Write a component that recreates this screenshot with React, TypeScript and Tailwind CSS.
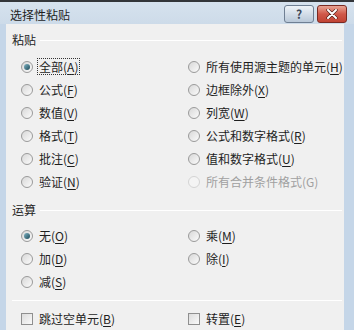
import React from "react";

const font = { fontFamily: '"Noto Sans CJK SC", "Noto Sans", sans-serif' };

function Label({ text, k, disabled }: { text: string; k: string; disabled?: boolean }) {
  return (
    <span className={disabled ? "text-[#a0a0a0]" : "text-[#1e1e1e]"}>
      {text}(
      <span className={disabled ? "" : "underline underline-offset-2"}>{k}</span>)
    </span>
  );
}

function Radio({ text, k, checked, disabled, focus }: { text: string; k: string; checked?: boolean; disabled?: boolean; focus?: boolean }) {
  return (
    <div className="flex items-center h-[23px] whitespace-nowrap">
      <span
        className={
          "w-[12px] h-[12px] rounded-full border flex items-center justify-center shrink-0 " +
          (disabled
            ? "border-[#d4d4d4] bg-[#f4f4f4]"
            : "border-[#9a9a9a] bg-gradient-to-br from-[#d8d8d8] to-[#fbfbfb]")
        }
      >
        {checked && (
          <span className="w-[6px] h-[6px] rounded-full bg-gradient-to-br from-[#7fb4c4] to-[#1d4b5a]" />
        )}
      </span>
      <span className={"ml-[5px] text-[12px] leading-[15px] px-[1px] " + (focus ? "outline outline-1 outline-dotted outline-[#333]" : "")}>
        <Label text={text} k={k} disabled={disabled} />
      </span>
    </div>
  );
}

function Check({ text, k }: { text: string; k: string }) {
  return (
    <div className="flex items-center h-[23px] whitespace-nowrap">
      <span className="w-[12px] h-[12px] border border-[#8f8f8f] bg-gradient-to-br from-[#dcdcdc] to-[#fafafa] shrink-0" />
      <span className="ml-[5px] text-[12px] leading-[15px] px-[1px]">
        <Label text={text} k={k} />
      </span>
    </div>
  );
}

function GroupTitle({ title }: { title: string }) {
  return (
    <div className="flex items-center h-[26px] pl-[6px] pr-[2px]">
      <span className="text-[12px] text-[#1e1e1e]">{title}</span>
      <span className="flex-1 ml-[4px] h-px bg-[#d9d9d9] border-b border-white" />
    </div>
  );
}

export default function App() {
  return (
    <div className="w-[354px] h-[330px] overflow-hidden flex flex-col bg-[#c5d6e8]" style={font}>
      <div className="h-[3px] bg-[#33363a]" />
      <div className="h-[30px] flex items-center bg-gradient-to-b from-[#d6e2ee] to-[#cddbe9]">
        <span className="ml-[10px] mt-[3px] text-[12px] text-[#1e1e1e]">选择性粘贴</span>
        <div className="ml-auto mr-[7px] flex gap-[3px] mt-[1px]">
          <div className="w-[30px] h-[18px] rounded-[3px] border border-[#6f7f93] bg-gradient-to-b from-[#eef3f8] via-[#d3dde8] to-[#b9c8d8] flex items-center justify-center text-[12px] font-bold text-[#3e4a5a]">
            ?
          </div>
          <div className="w-[30px] h-[18px] rounded-[3px] border border-[#7a2a22] bg-gradient-to-b from-[#e8a394] via-[#d0594a] to-[#c14333] flex items-center justify-center">
            <svg width="12" height="10" viewBox="0 0 12 10">
              <path d="M2 1 L10 9 M10 1 L2 9" stroke="#4a1a14" strokeWidth="3.2" strokeLinecap="round" />
              <path d="M2 1 L10 9 M10 1 L2 9" stroke="#ffffff" strokeWidth="2" strokeLinecap="round" />
            </svg>
          </div>
        </div>
      </div>
      <div className="flex-1 ml-[6px] mr-[10px] bg-[#f0f0f0] pt-[3px]">
        <GroupTitle title="粘贴" />
        <div className="grid grid-cols-[167px_1fr] pl-[15px] mt-[2px]">
          <Radio text="全部" k="A" checked focus />
          <Radio text="所有使用源主题的单元" k="H" />
          <Radio text="公式" k="F" />
          <Radio text="边框除外" k="X" />
          <Radio text="数值" k="V" />
          <Radio text="列宽" k="W" />
          <Radio text="格式" k="T" />
          <Radio text="公式和数字格式" k="R" />
          <Radio text="批注" k="C" />
          <Radio text="值和数字格式" k="U" />
          <Radio text="验证" k="N" />
          <Radio text="所有合并条件格式" k="G" disabled />
        </div>
        <div className="mt-[4px]">
          <GroupTitle title="运算" />
        </div>
        <div className="grid grid-cols-[167px_1fr] pl-[15px] mt-[1px]">
          <Radio text="无" k="O" checked />
          <Radio text="乘" k="M" />
          <Radio text="加" k="D" />
          <Radio text="除" k="I" />
          <Radio text="减" k="S" />
        </div>
        <div className="ml-[6px] mr-[2px] mt-[7px] h-px bg-[#d9d9d9] border-b border-white" />
        <div className="grid grid-cols-[167px_1fr] pl-[15px] mt-[6px]">
          <Check text="跳过空单元" k="B" />
          <Check text="转置" k="E" />
        </div>
      </div>
    </div>
  );
}
